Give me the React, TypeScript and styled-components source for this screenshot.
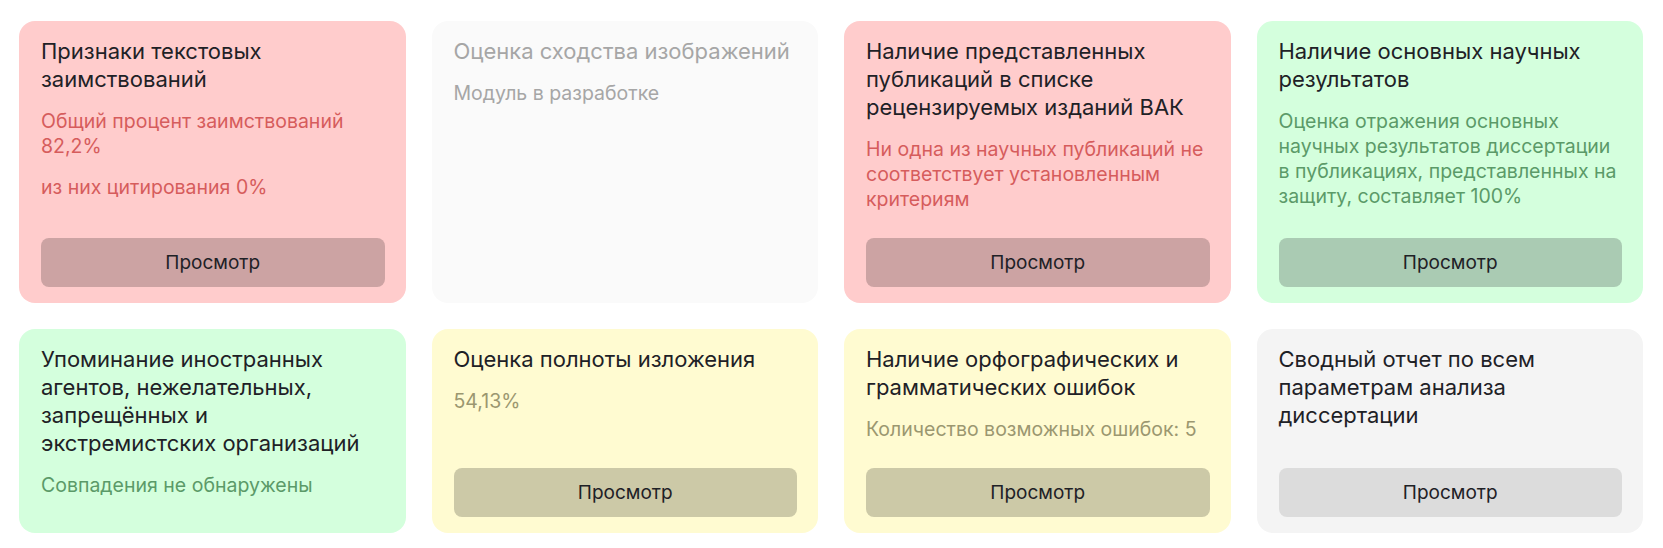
import React from 'react'
import styled, { createGlobalStyle } from 'styled-components'

type Tone = 'red' | 'green' | 'yellow' | 'gray' | 'off'

const palette: Record<Tone, { bg: string; text: string; btn: string; title: string }> = {
  red: { bg: '#ffcccc', text: '#d65c5c', btn: '#cca3a3', title: '#1e2126' },
  green: { bg: '#d4ffdd', text: '#5b9a68', btn: '#aacbb3', title: '#1e2126' },
  yellow: { bg: '#fffbd1', text: '#9b9770', btn: '#ccc9a7', title: '#1e2126' },
  gray: { bg: '#f4f4f4', text: '#8a8a8a', btn: '#dcdcdc', title: '#1e2126' },
  off: { bg: '#fafafa', text: '#a6a6a6', btn: '#e0e0e0', title: '#a6a6a6' },
}

interface ICard {
  title: string
  tone: Tone
  lines?: string[]
  button?: boolean
}

const cards: ICard[] = [
  {
    title: 'Признаки текстовых заимствований',
    tone: 'red',
    lines: ['Общий процент заимствований 82,2%', 'из них цитирования 0%'],
    button: true,
  },
  { title: 'Оценка сходства изображений', tone: 'off', lines: ['Модуль в разработке'] },
  {
    title: 'Наличие представленных публикаций в списке рецензируемых изданий ВАК',
    tone: 'red',
    lines: ['Ни одна из научных публикаций не соответствует установленным критериям'],
    button: true,
  },
  {
    title: 'Наличие основных научных результатов',
    tone: 'green',
    lines: ['Оценка отражения основных научных результатов диссертации в публикациях, представленных на защиту, составляет 100%'],
    button: true,
  },
  {
    title: 'Упоминание иностранных агентов, нежелательных, запрещённых и экстремистских организаций',
    tone: 'green',
    lines: ['Совпадения не обнаружены'],
  },
  { title: 'Оценка полноты изложения', tone: 'yellow', lines: ['54,13%'], button: true },
  {
    title: 'Наличие орфографических и грамматических ошибок',
    tone: 'yellow',
    lines: ['Количество возможных ошибок: 5'],
    button: true,
  },
  { title: 'Сводный отчет по всем параметрам анализа диссертации', tone: 'gray', button: true },
]

export default function App() {
  return (
    <>
      <GlobalStyle />
      <Grid>
        {cards.map((card) => (
          <Card key={card.title} $tone={card.tone}>
            <Content>
              <Title $tone={card.tone}>{card.title}</Title>
              {card.lines?.map((line) => (
                <Text key={line} $tone={card.tone}>{line}</Text>
              ))}
            </Content>
            {card.button && <ViewBtn $tone={card.tone}>Просмотр</ViewBtn>}
          </Card>
        ))}
      </Grid>
    </>
  )
}

const GlobalStyle = createGlobalStyle`
  body {
    margin: 0;
    background: #ffffff;
    font-family: 'Inter', 'Noto Sans', sans-serif;
  }
`

const Grid = styled.div`
  display: grid;
  grid-template-columns: repeat(4, 1fr);
  gap: 26px;
  padding: 21px 20px 15px 19px;
`

const Card = styled.div<{ $tone: Tone }>`
  display: flex;
  flex-direction: column;
  min-height: 204px;
  box-sizing: border-box;
  background: ${(p) => palette[p.$tone].bg};
  border-radius: 16px;
  padding: 16px 21px 16px 22px;
`

const Content = styled.div`
  display: flex;
  flex-direction: column;
  gap: 16px;
  flex: 1;
`

const Title = styled.h3<{ $tone: Tone }>`
  margin: 0;
  font-size: 22px;
  line-height: 28px;
  font-weight: 400;
  color: ${(p) => palette[p.$tone].title};
`

const Text = styled.p<{ $tone: Tone }>`
  margin: 0;
  font-size: 19.5px;
  line-height: 25px;
  color: ${(p) => palette[p.$tone].text};
`

const ViewBtn = styled.button<{ $tone: Tone }>`
  margin-top: 26px;
  height: 49px;
  border: none;
  border-radius: 8px;
  background: ${(p) => palette[p.$tone].btn};
  font-family: inherit;
  font-size: 19px;
  color: #1e2126;
  cursor: pointer;
`
